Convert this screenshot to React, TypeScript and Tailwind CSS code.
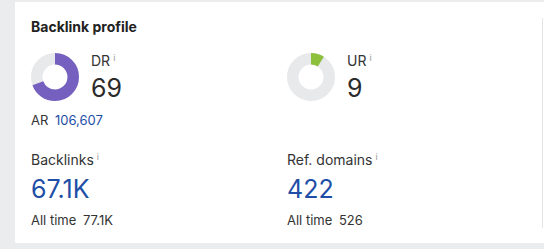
import React from "react";

function Donut({ value, color }: { value: number; color: string }) {
  const r = 18.25;
  const c = 2 * Math.PI * r;
  const len = (value / 100) * c;
  return (
    <svg width="48" height="48" viewBox="0 0 48 48" className="shrink-0">
      <circle cx="24" cy="24" r={r} fill="none" stroke="#e8e9eb" strokeWidth="11.5" />
      <circle
        cx="24"
        cy="24"
        r={r}
        fill="none"
        stroke={color}
        strokeWidth="11.5"
        strokeDasharray={`${len} ${c}`}
        transform="rotate(-90 24 24)"
      />
    </svg>
  );
}

function Info() {
  return <span className="ml-[3px] self-start text-[9px] leading-[10px] text-[#9a9a9a] mt-[2px]">i</span>;
}

function Label({ text }: { text: string }) {
  return (
    <div className="flex h-5 items-start text-[14px] leading-5 text-[#333]">
      <span>{text}</span>
      <Info />
    </div>
  );
}

export default function App() {
  return (
    <div
      className="h-[249px] w-[544px] overflow-hidden bg-[#ebecee] pt-[2px] pl-[15px]"
      style={{ fontFamily: "Inter, 'Liberation Sans', sans-serif" }}
    >
      <div className="flex h-[241px] w-[560px] bg-white">
        <div className="w-[527px] pl-4 pt-[15px]">
          <div className="text-[14px] font-bold leading-5 text-[#222]">Backlink profile</div>
          <div className="mt-[14px] grid grid-cols-[256px_255px]">
            <div>
              <div className="flex items-center gap-3">
                <Donut value={69} color="#7560c0" />
                <div>
                  <Label text="DR" />
                  <div className="mt-[3px] text-[25px] leading-7 text-[#2b2b2b]">69</div>
                </div>
              </div>
              <div className="mt-[9px] text-[13px] leading-[18px] text-[#333]">
                AR <span className="ml-[3px] text-[#1e4ea6]">106,607</span>
              </div>
            </div>
            <div>
              <div className="flex items-center gap-3">
                <Donut value={9} color="#8bbf3c" />
                <div>
                  <Label text="UR" />
                  <div className="mt-[3px] text-[25px] leading-7 text-[#2b2b2b]">9</div>
                </div>
              </div>
            </div>
          </div>
          <div className="mt-[21px] grid grid-cols-[256px_255px]">
            <div>
              <Label text="Backlinks" />
              <div className="mt-[5px] text-[25px] leading-7 text-[#1e4ea6]">67.1K</div>
              <div className="mt-[8px] text-[13px] leading-[18px] text-[#333]">
                All time <span className="ml-[3px]">77.1K</span>
              </div>
            </div>
            <div>
              <Label text="Ref. domains" />
              <div className="mt-[5px] text-[25px] leading-7 text-[#1e4ea6]">422</div>
              <div className="mt-[8px] text-[13px] leading-[18px] text-[#333]">
                All time <span className="ml-[3px]">526</span>
              </div>
            </div>
          </div>
        </div>
        <div className="mt-4 h-[210px] border-l border-[#e3e4e6]" />
      </div>
    </div>
  );
}
